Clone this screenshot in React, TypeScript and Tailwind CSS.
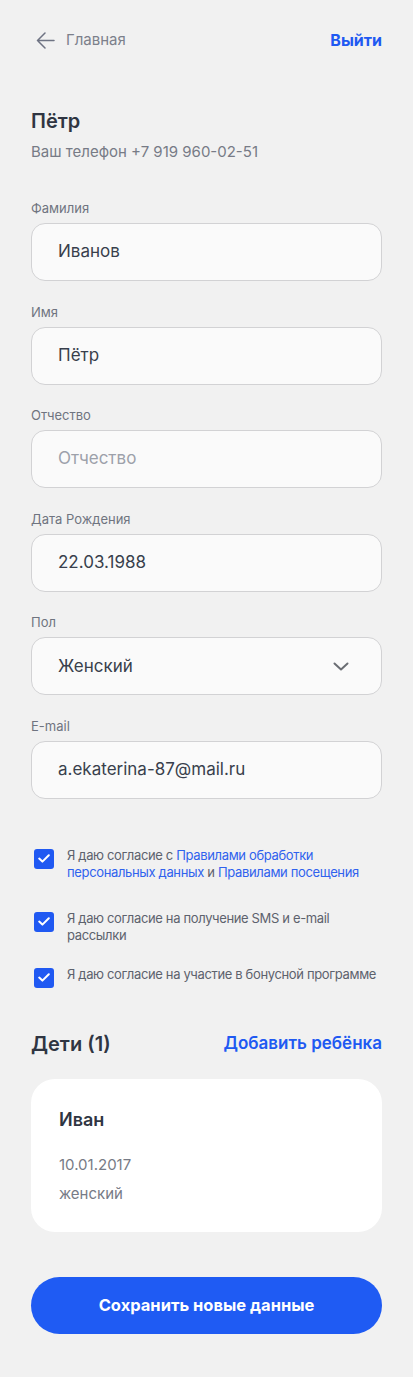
import { useState } from 'react';

const font = { fontFamily: 'Inter, "Noto Sans", sans-serif' };

function Field({ label, value, placeholder, select }: { label: string; value?: string; placeholder?: string; select?: boolean }) {
  return (
    <div className="mb-[22.6px]">
      <div className="h-4 text-[13px] leading-4 text-[#6f7480]">{label}</div>
      <div className="mt-[7px] flex h-[58px] items-center justify-between rounded-[14px] border border-[#d2d2d4] bg-[#fafafa] pl-[26px] pr-[32px]">
        {value ? (
          <span className="text-[17px] text-[#383f4c]">{value}</span>
        ) : (
          <span className="text-[17px] text-[#9da1aa]">{placeholder}</span>
        )}
        {select && (
          <svg width="16" height="9" viewBox="0 0 16 9" fill="none">
            <path d="M1.5 1.5L8 7.5L14.5 1.5" stroke="#6a6d73" strokeWidth="2" strokeLinecap="round" strokeLinejoin="round" />
          </svg>
        )}
      </div>
    </div>
  );
}

function Check({ children, className }: { children: React.ReactNode; className?: string }) {
  const [on, setOn] = useState(true);
  return (
    <div className={`flex items-start gap-[13px] ${className ?? ''}`}>
      <button
        onClick={() => setOn(!on)}
        className={`flex h-5 w-5 shrink-0 items-center justify-center rounded-[3px] ${on ? 'bg-[#2059f2]' : 'border border-[#c5c5c5] bg-white'}`}
      >
        {on && (
          <svg width="12" height="9" viewBox="0 0 12 9" fill="none">
            <path d="M1.2 4.6L4.4 7.6L10.8 1.2" stroke="white" strokeWidth="2" strokeLinecap="round" strokeLinejoin="round" />
          </svg>
        )}
      </button>
      <p className="-mt-[2px] text-[13px] leading-[17.5px] tracking-[-0.35px] text-[#5d626d]">{children}</p>
    </div>
  );
}

export default function App() {
  return (
    <div className="flex min-h-screen flex-col bg-[#f1f1f1] px-[31px] pt-[30px] pb-[43px]" style={font}>
      <div className="flex h-5 items-center justify-between">
        <div className="flex items-center gap-[11px]">
          <svg width="19" height="17" viewBox="0 0 19 17" fill="none" className="ml-[5px]">
            <path d="M9 1L1.5 8.5L9 16M1.5 8.5H18" stroke="#6e7383" strokeWidth="1.5" strokeLinecap="round" strokeLinejoin="round" />
          </svg>
          <span className="text-[15px] text-[#7c808b]">Главная</span>
        </div>
        <span className="text-[16px] font-bold text-[#2059f2]">Выйти</span>
      </div>

      <h1 className="mt-[57px] text-[20px] leading-7 font-semibold text-[#2f3542]">Пётр</h1>
      <p className="mt-[7px] text-[15px] leading-5 text-[#777b86]">Ваш телефон +7 919 960-02-51</p>

      <div className="mt-[38px] flex flex-col">
        <Field label="Фамилия" value="Иванов" />
        <Field label="Имя" value="Пётр" />
        <Field label="Отчество" placeholder="Отчество" />
        <Field label="Дата Рождения" value="22.03.1988" />
        <Field label="Пол" value="Женский" select />
        <Field label="E-mail" value="a.ekaterina-87@mail.ru" />
      </div>

      <div className="mt-[27px] pl-[3px]">
        <Check>
          Я даю согласие с <a className="text-[#2f62ee]">Правилами обработки персональных данных</a> и{' '}
          <a className="text-[#2f62ee]">Правилами посещения</a>
        </Check>
        <Check className="mt-[30px]">Я даю согласие на получение SMS и e-mail рассылки</Check>
        <Check className="mt-[23px]">Я даю согласие на участие в бонусной программе</Check>
      </div>

      <div className="mt-[42px] flex h-7 items-center justify-between">
        <h2 className="text-[20px] font-semibold text-[#2f3542]">Дети (1)</h2>
        <span className="text-[17px] font-semibold text-[#2059f2]">Добавить ребёнка</span>
      </div>

      <div className="mt-[21px] rounded-[24px] bg-white px-[28px] pt-[29px] pb-[28px]">
        <div className="text-[18px] leading-6 font-semibold text-[#2f3542]">Иван</div>
        <div className="mt-[23px] text-[15px] leading-5 text-[#777b86]">10.01.2017</div>
        <div className="mt-[9px] text-[15px] leading-5 text-[#777b86]">женский</div>
      </div>

      <button className="mt-[45px] flex h-[57px] w-full items-center justify-center rounded-full bg-[#1f5bf3] text-[16.5px] font-bold text-white">
        Сохранить новые данные
      </button>
    </div>
  );
}
